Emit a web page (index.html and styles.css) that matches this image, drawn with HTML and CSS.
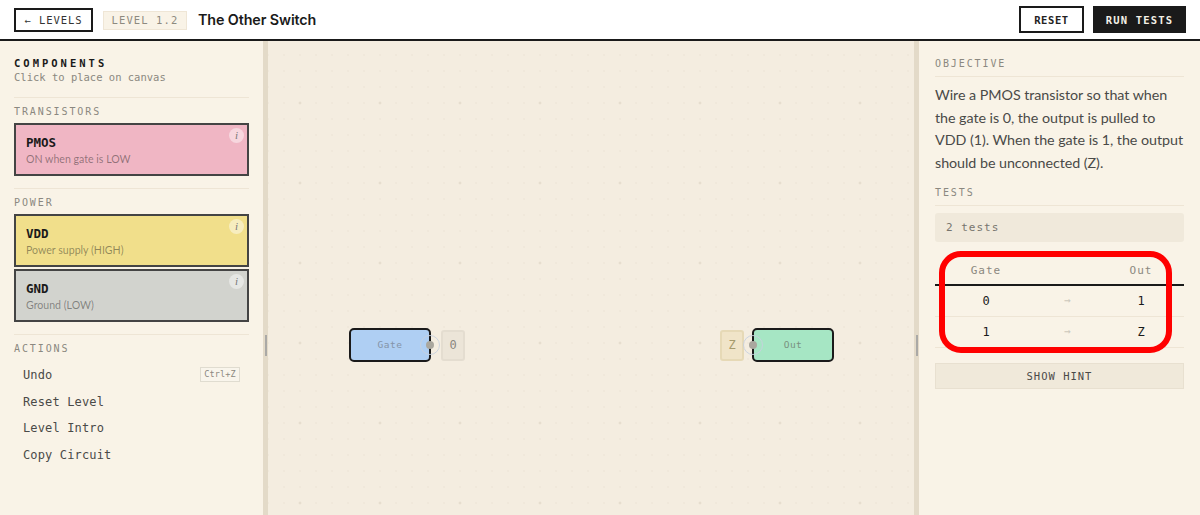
FILE: index.html
```html
<!DOCTYPE html>
<html lang="en">
<head>
<meta charset="utf-8">
<title>The Other Switch</title>
<link rel="stylesheet" href="styles.css">
</head>
<body>
<header class="topbar">
  <div class="topbar-left">
    <button class="btn back">← LEVELS</button>
    <span class="level-badge">LEVEL 1.2</span>
    <h1 class="title">The Other Switch</h1>
  </div>
  <div class="topbar-right">
    <button class="btn reset">RESET</button>
    <button class="btn run">RUN TESTS</button>
  </div>
</header>
<main class="workspace">
  <aside class="sidebar">
    <section class="side-head">
      <h2 class="side-title">COMPONENTS</h2>
      <p class="side-sub">Click to place on canvas</p>
    </section>
    <section class="side-group">
      <h3 class="label">TRANSISTORS</h3>
      <div class="comp pmos"><span class="info">i</span><strong>PMOS</strong><small>ON when gate is LOW</small></div>
    </section>
    <section class="side-group">
      <h3 class="label">POWER</h3>
      <div class="comp vdd"><span class="info">i</span><strong>VDD</strong><small>Power supply (HIGH)</small></div>
      <div class="comp gnd"><span class="info">i</span><strong>GND</strong><small>Ground (LOW)</small></div>
    </section>
    <section class="side-group actions">
      <h3 class="label">ACTIONS</h3>
      <div class="action">Undo<kbd class="kbd">Ctrl+Z</kbd></div>
      <div class="action">Reset Level</div>
      <div class="action">Level Intro</div>
      <div class="action">Copy Circuit</div>
    </section>
  </aside>
  <div class="resizer"><span class="grip"></span></div>
  <section class="canvas">
    <div class="node gate">Gate<span class="ring"></span><span class="dot"></span></div>
    <div class="chip chip-gate">0</div>
    <div class="chip chip-out">Z</div>
    <div class="node out">Out<span class="ring"></span><span class="dot"></span></div>
  </section>
  <div class="resizer"><span class="grip"></span></div>
  <aside class="panel">
    <h3 class="label panel-label">OBJECTIVE</h3>
    <p class="objective">Wire a PMOS transistor so that when the gate is 0, the output is pulled to VDD (1). When the gate is 1, the output should be unconnected (Z).</p>
    <h3 class="label panel-label tests-label">TESTS</h3>
    <div class="test-count">2 tests</div>
    <div class="truth">
      <div class="row head"><span>Gate</span><span></span><span>Out</span></div>
      <div class="row"><span>0</span><span class="arrow">→</span><span>1</span></div>
      <div class="row"><span>1</span><span class="arrow">→</span><span>Z</span></div>
    </div>
    <button class="hint">SHOW HINT</button>
    <div class="annotation"></div>
  </aside>
</main>
</body>
</html>
```

FILE: styles.css
```css
* { box-sizing: border-box; }
html, body { height: 100%; }
body {
  margin: 0;
  display: flex;
  flex-direction: column;
  overflow: hidden;
  background: #f9f3e7;
  color: #1a1a1a;
  font-family: "Inter", "Liberation Sans", sans-serif;
}
button { font-family: "DejaVu Sans Mono", monospace; cursor: pointer; }
h1, h2, h3, p { margin: 0; }

.topbar {
  height: 41px;
  flex: none;
  display: flex;
  align-items: flex-start;
  justify-content: space-between;
  background: #fff;
  border-bottom: 2px solid #1a1a1a;
  padding: 6px 14px 0;
}
.topbar-left, .topbar-right { display: flex; align-items: center; }
.topbar-left { padding-top: 2px; }
.btn {
  height: 24px;
  border: 2px solid #1a1a1a;
  background: #fff;
  color: #333;
  font-size: 10.5px;
  letter-spacing: .9px;
  padding: 0;
}
.back { width: 79px; }
.level-badge {
  margin-left: 10px;
  height: 19px;
  width: 84px;
  text-align: center;
  background: #f9f3e7;
  border: 1px solid #efe6d6;
  font: 10.5px/17px "DejaVu Sans Mono", monospace;
  letter-spacing: 1.1px;
  color: #8d8a80;
}
.title {
  margin-left: 11px;
  padding-bottom: 2px;
  font-size: 14.3px;
  font-weight: 600;
  letter-spacing: -.1px;
}
.reset {
  width: 65px;
  height: 27px;
  color: #222;
  font-weight: 700;
  letter-spacing: .6px;
}
.run {
  margin-left: 9px;
  width: 93px;
  height: 27px;
  background: #1a1a1a;
  color: #f4f0e6;
  font-weight: 700;
  letter-spacing: 1.2px;
}

.workspace { flex: 1; display: flex; min-height: 0; }
.sidebar {
  width: 263px;
  flex: none;
  padding: 16px 14px 0;
  background: #f9f3e7;
  font-family: "DejaVu Sans Mono", monospace;
}
.side-title {
  font-size: 10.5px;
  line-height: 13px;
  font-weight: 700;
  letter-spacing: 3px;
}
.side-sub {
  margin-top: 1px;
  font-size: 10.5px;
  line-height: 13px;
  color: #8b8880;
}
.side-head { height: 41px; border-bottom: 1px solid #eee5d5; }
.label {
  font: 400 10px/12px "DejaVu Sans Mono", monospace;
  letter-spacing: 1.9px;
  color: #8b8880;
}
.side-group { padding: 7px 0 12px; border-bottom: 1px solid #eee5d5; }
.side-group .label { margin: 0 0 4px; line-height: 14px; }
.side-group.actions .label { margin-bottom: 5.5px; }
.actions { border-bottom: 0; }
.comp {
  position: relative;
  height: 53px;
  border: 2px solid #444;
  padding: 10px 10px 0;
  display: flex;
  flex-direction: column;
}
.comp + .comp { margin-top: 2px; }
.comp strong { font: 700 12.5px/16px "DejaVu Sans Mono", monospace; color: #1a1a1a; }
.comp small { margin-top: 1px; font: 400 10.6px/14px "Lato", "Liberation Sans", sans-serif; color: rgba(26,26,26,.45); }
.pmos { background: #f0b6c4; }
.vdd { background: #f1df8b; }
.gnd { background: #d2d3ce; }
.info {
  position: absolute;
  top: 3px;
  right: 3px;
  width: 15px;
  height: 15px;
  border-radius: 50%;
  background: rgba(255,255,255,.45);
  text-align: center;
  font: italic 11px/15px "Liberation Serif", serif;
  color: #777;
}
.action {
  display: flex;
  align-items: center;
  justify-content: space-between;
  height: 26.8px;
  padding: 0 9px;
  font-size: 12px;
  letter-spacing: .14px;
  color: #4a4a48;
}
.kbd {
  font: 8.5px/13px "DejaVu Sans Mono", monospace;
  width: 40px;
  height: 15px;
  text-align: center;
  border: 1px solid #e0dcd0;
  color: #8b8880;
  background: #f9f5ec;
}

.resizer {
  flex: none;
  width: 5px;
  background: #e3dac8;
  position: relative;
}
.grip {
  position: absolute;
  left: 2px;
  top: 294px;
  width: 2px;
  height: 21px;
  background: #aaa9a6;
}
.canvas {
  flex: 1;
  min-width: 0;
  position: relative;
  overflow: hidden;
  background-color: #f4ede0;
  background-image:
    radial-gradient(circle, #e6decf 1.2px, transparent 1.7px),
    radial-gradient(circle, #efe7d9 .6px, transparent 1px);
  background-size: 80px 80px, 16px 16px;
  background-position: -8px 22px, -8px 6px;
}

.node {
  position: absolute;
  top: 287px;
  width: 82px;
  height: 34px;
  border: 2px solid #1a1a1a;
  border-radius: 5px;
  text-align: center;
  font: 9.5px/30px "DejaVu Sans Mono", monospace;
  letter-spacing: .5px;
}
.gate { left: 81px; background: #afcff3; color: #8494a8; }
.out { left: 484px; background: #a6e6c4; color: #79917f; }
.dot {
  position: absolute;
  top: 11px;
  width: 8px;
  height: 8px;
  border-radius: 50%;
  background: #aaa79e;
}
.ring {
  position: absolute;
  top: 5px;
  width: 20px;
  height: 20px;
  border-radius: 50%;
  border: 1px solid rgba(200,208,222,.9);
}
.gate .dot { right: -5px; }
.gate .ring { right: -11px; }
.out .dot { left: -5px; }
.out .ring { left: -11px; }
.chip {
  position: absolute;
  top: 289px;
  width: 24px;
  height: 31px;
  border-radius: 3px;
  text-align: center;
  font: 12px/27px "DejaVu Sans Mono", monospace;
}
.chip-gate { left: 173px; background: #ece5d8; border: 2px solid #e4ddd0; color: #8b8880; }
.chip-out { left: 452px; background: #f0e4c8; border: 2px solid #e6d9b6; color: #a69a6c; }

.panel {
  flex: none;
  width: 281px;
  position: relative;
  padding: 17px 16px 0;
  background: #f9f3e7;
}
.panel-label {
  height: 19px;
  border-bottom: 1px solid #eee5d5;
}
.objective {
  margin-top: 7px;
  font-family: "Lato", "Liberation Sans", sans-serif;
  font-size: 14.3px;
  line-height: 22.5px;
  letter-spacing: -.05px;
  color: #4a4a48;
}
.tests-label { margin-top: 13px; }
.test-count {
  margin-top: 7px;
  height: 29px;
  padding-left: 11px;
  background: #f0e9db;
  border-radius: 3px;
  font: 11px/29px "DejaVu Sans Mono", monospace;
  letter-spacing: 1px;
  color: #77756e;
}
.truth { margin-top: 16px; font-family: "DejaVu Sans Mono", monospace; }
.row {
  display: grid;
  grid-template-columns: 102px 61px 86px;
  height: 31px;
  line-height: 30px;
  text-align: center;
  font-size: 12px;
  border-bottom: 1px solid #eee5d5;
  color: #1a1a1a;
}
.row.head {
  height: 28px;
  line-height: 25px;
  font-size: 11px;
  letter-spacing: 1px;
  color: #8b8880;
  border-bottom: 2px solid #1a1a1a;
}
.arrow { color: #ccc8bc; font-size: 11px; }
.hint {
  display: block;
  margin-top: 15px;
  width: 100%;
  height: 26px;
  background: #f0e9da;
  border: 1px solid #e8e0d0;
  font-size: 10.5px;
  letter-spacing: 1px;
  color: #4a4a48;
}
.annotation {
  position: absolute;
  left: 20px;
  top: 210px;
  width: 233px;
  height: 102px;
  border: 6px solid #f00;
  border-radius: 22px;
  pointer-events: none;
}
```
